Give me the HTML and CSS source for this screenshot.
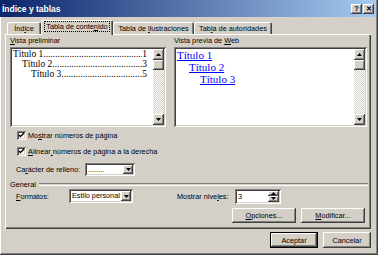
FILE: index.html
```html
<!DOCTYPE html>
<html lang="es">
<head>
    <meta charset="UTF-8">
    <meta name="viewport" content="width=device-width, initial-scale=1.0">
    <title>Índice y tablas</title>
    <link rel="stylesheet" href="styles.css">
</head>
<body>

    <div class="window">

        <!-- barra de título -->
        <div class="titlebar">
            <span class="title">Índice y tablas</span>
            <div class="caption-buttons">
                <span class="caption-btn">?</span>
                <span class="caption-btn close">✕</span>
            </div>
        </div>

        <!-- pestañas -->
        <div class="tabs">
            <div class="tab" style="width: 34px"><span>Índ<u>i</u>ce</span></div>
            <div class="tab selected" style="width: 72px"><span class="focus">Tabla de conte<u>n</u>ido</span></div>
            <div class="tab" style="width: 81px"><span>Tabla de <u>i</u>lustraciones</span></div>
            <div class="tab" style="width: 78px"><span>Tab<u>l</u>a de autoridades</span></div>
        </div>

        <div class="panel">

            <div class="previews">
                <div class="preview-col">
                    <div class="label"><u>V</u>ista preliminar</div>
                    <div class="listbox left-box">
                        <div class="list-content print">
                            <div class="toc-row lvl1"><span>Título 1</span><span class="leader"></span><span>1</span></div>
                            <div class="toc-row lvl2"><span>Título 2</span><span class="leader"></span><span>3</span></div>
                            <div class="toc-row lvl3"><span>Título 3</span><span class="leader"></span><span>5</span></div>
                        </div>
                        <div class="scrollbar">
                            <div class="sb-btn"><svg width="5" height="3"><polygon points="2.5,0 5,3 0,3" fill="#000"/></svg></div>
                            <div class="sb-thumb"></div>
                            <div class="sb-track"></div>
                            <div class="sb-btn"><svg width="5" height="3"><polygon points="0,0 5,0 2.5,3" fill="#000"/></svg></div>
                        </div>
                    </div>
                </div>
                <div class="preview-col">
                    <div class="label">Vista previa de <u>W</u>eb</div>
                    <div class="listbox right-box">
                        <div class="list-content web">
                            <div class="web-row lvl1"><a>Título 1</a></div>
                            <div class="web-row lvl2"><a>Título 2</a></div>
                            <div class="web-row lvl3"><a>Título 3</a></div>
                        </div>
                        <div class="scrollbar">
                            <div class="sb-btn"><svg width="5" height="3"><polygon points="2.5,0 5,3 0,3" fill="#000"/></svg></div>
                            <div class="sb-thumb"></div>
                            <div class="sb-track"></div>
                            <div class="sb-btn"><svg width="5" height="3"><polygon points="0,0 5,0 2.5,3" fill="#000"/></svg></div>
                        </div>
                    </div>
                </div>
            </div>

            <div class="check-row first">
                <span class="checkbox"><svg width="9" height="9"><path d="M2 4 L3.5 5.5 L7 2" stroke="#000" stroke-width="1.4" fill="none"/></svg></span>
                <span>Mo<u>s</u>trar números de página</span>
            </div>
            <div class="check-row">
                <span class="checkbox"><svg width="9" height="9"><path d="M2 4 L3.5 5.5 L7 2" stroke="#000" stroke-width="1.4" fill="none"/></svg></span>
                <span><u>A</u>linear<u> </u>números de página a la derecha</span>
            </div>

            <div class="fill-row">
                <span class="fill-label">Ca<u>r</u>ácter de relleno:</span>
                <div class="combo fill-combo">
                    <span class="combo-text">........</span>
                    <span class="combo-btn"><svg width="5" height="3"><polygon points="0,0 5,0 2.5,3" fill="#000"/></svg></span>
                </div>
            </div>

            <div class="group-title">
                <span>General</span>
                <span class="group-line"></span>
            </div>

            <div class="format-row">
                <span class="format-label"><u>F</u>ormatos:</span>
                <div class="combo format-combo">
                    <span class="combo-text">Estilo personal</span>
                    <span class="combo-btn"><svg width="5" height="3"><polygon points="0,0 5,0 2.5,3" fill="#000"/></svg></span>
                </div>
                <span class="levels-label">Mostrar nive<u>l</u>es:</span>
                <div class="spin">
                    <span class="spin-text">3</span>
                    <span class="spin-btns">
                        <span class="spin-btn"><svg width="5" height="3"><polygon points="2.5,0 5,3 0,3" fill="#000"/></svg></span>
                        <span class="spin-btn"><svg width="5" height="3"><polygon points="0,0 5,0 2.5,3" fill="#000"/></svg></span>
                    </span>
                </div>
            </div>

            <div class="panel-buttons">
                <button class="button"><u>O</u>pciones...</button>
                <button class="button"><u>M</u>odificar...</button>
            </div>

        </div>

        <div class="footer">
            <button class="button default">Aceptar</button>
            <button class="button">Cancelar</button>
        </div>

    </div>

</body>
</html>
```

FILE: styles.css
```css
body {
    margin: 0;
    padding: 0;
    font-family: 'Liberation Sans', Arial, sans-serif;
    font-size: 7.3px;
    color: #000;
    background-color: #d4d0c8;
}

u {
    text-decoration: underline;
    text-underline-offset: 1px;
}

.window {
    width: 378px;
    height: 255px;
    box-sizing: border-box;
    padding: 0 2px 2px 0;
    background-color: #d4d0c8;
    box-shadow: inset -1px -1px #404040, inset 1px 0 #fff, inset -2px -2px #808080;
}

/* barra de título */
.titlebar {
    height: 17px;
    display: flex;
    align-items: center;
    justify-content: space-between;
    padding: 0 2px 0 2px;
    background: linear-gradient(to right, #0a246a, #a6caf0);
}

.title {
    color: #fff;
    font-weight: bold;
    font-size: 8.5px;
}

.caption-buttons {
    display: flex;
    gap: 1px;
}

.caption-btn {
    width: 11px;
    height: 10px;
    display: flex;
    align-items: center;
    justify-content: center;
    font-weight: bold;
    font-size: 7.5px;
    background-color: #d4d0c8;
    box-shadow: inset -1px -1px #404040, inset 1px 1px #fff, inset -2px -2px #808080;
}

.caption-btn.close {
    font-size: 7px;
}

/* pestañas */
.tabs {
    display: flex;
    align-items: flex-end;
    height: 14px;
    margin: 3px 0 0 7px;
}

.tab {
    height: 12px;
    box-sizing: border-box;
    display: flex;
    align-items: center;
    justify-content: center;
    white-space: nowrap;
    border-radius: 2px 2px 0 0;
    background-color: #d4d0c8;
    box-shadow: inset 1px 1px #fff, inset -1px 0 #404040, inset -2px 0 #808080;
}

.tab.selected {
    height: 15px;
    margin-bottom: -1px;
    position: relative;
    z-index: 1;
    padding-bottom: 2px;
}

.focus {
    outline: 1px dotted #000;
    padding: 0 1px;
}

/* panel de la pestaña */
.panel {
    height: 195px;
    margin-left: 5px;
    width: 366px;
    box-sizing: border-box;
    padding: 3px 2px 0 1px;
    box-shadow: inset 1px 1px #fff, inset -1px -1px #404040, inset -2px -2px #808080;
}

.previews {
    display: flex;
    gap: 8px;
    padding-left: 4px;
}

.label {
    height: 10px;
    line-height: 8px;
    white-space: nowrap;
}

.listbox {
    height: 80px;
    box-sizing: border-box;
    padding: 2px;
    display: flex;
    background-color: #fff;
    box-shadow: inset 1px 1px #808080, inset -1px -1px #fff, inset 2px 2px #404040, inset -2px -2px #d4d0c8;
}

.left-box {
    width: 156px;
}

.right-box {
    width: 193px;
}

.list-content {
    flex: 1;
    overflow: hidden;
}

.scrollbar {
    width: 11px;
    display: flex;
    flex-direction: column;
}

.sb-btn, .sb-thumb, .combo-btn, .spin-btn {
    display: flex;
    align-items: center;
    justify-content: center;
    background-color: #d4d0c8;
    box-shadow: inset -1px -1px #404040, inset 1px 1px #fff, inset -2px -2px #808080;
}

.sb-btn {
    height: 11px;
}

.sb-thumb {
    height: 10px;
}

.sb-track {
    flex: 1;
    background: repeating-conic-gradient(#fff 0 25%, #d4d0c8 0 50%) 0 0 / 2px 2px;
}

/* vista preliminar */
.print {
    font-family: 'Liberation Serif', 'Times New Roman', serif;
    font-size: 9.5px;
    color: #000;
    padding: 0 6px 0 1px;
}

.toc-row {
    display: flex;
    height: 10px;
    line-height: 10px;
    white-space: nowrap;
}

.toc-row.lvl2 {
    padding-left: 9px;
}

.toc-row.lvl3 {
    padding-left: 18px;
}

.leader {
    flex: 1;
    overflow: hidden;
}

.leader::before {
    content: "..................................................................................................";
}

.web {
    font-family: 'Liberation Serif', 'Times New Roman', serif;
    font-size: 11px;
    padding: 0 0 0 1px;
}

.web-row {
    height: 12px;
    line-height: 12px;
}

.web-row a {
    color: #0000ff;
    text-decoration: underline;
}

.web-row.lvl2 {
    padding-left: 12px;
}

.web-row.lvl3 {
    padding-left: 23px;
}

/* casillas */
.check-row {
    display: flex;
    align-items: center;
    gap: 2px;
    height: 9px;
    margin-top: 7px;
    padding-left: 11px;
    white-space: nowrap;
}

.check-row.first {
    margin-top: 4px;
}

.checkbox {
    width: 9px;
    height: 9px;
    display: flex;
    background-color: #fff;
    box-shadow: inset 1px 1px #808080, inset -1px -1px #fff, inset 2px 2px #404040, inset -2px -2px #d4d0c8;
}

.fill-row {
    display: flex;
    align-items: center;
    margin-top: 7px;
    padding-left: 10px;
}

.fill-label {
    width: 69px;
    white-space: nowrap;
}

.combo {
    height: 13px;
    box-sizing: border-box;
    padding: 2px;
    display: flex;
    align-items: stretch;
    background-color: #fff;
    box-shadow: inset 1px 1px #808080, inset -1px -1px #fff, inset 2px 2px #404040, inset -2px -2px #d4d0c8;
}

.combo-text {
    flex: 1;
    padding-left: 1px;
    line-height: 9px;
    white-space: nowrap;
}

.combo-btn {
    width: 10px;
}

.fill-combo {
    width: 50px;
}

/* grupo General */
.group-title {
    display: flex;
    align-items: center;
    gap: 3px;
    height: 9px;
    margin-top: 4px;
    padding-left: 4px;
}

.group-line {
    flex: 1;
    height: 1px;
    border-top: 1px solid #808080;
    border-bottom: 1px solid #fff;
    margin-right: 1px;
}

.format-row {
    display: flex;
    align-items: center;
    height: 14px;
    padding-left: 10px;
}

.format-label {
    width: 53px;
}

.format-combo {
    width: 64px;
    height: 14px;
}

.format-combo .combo-text {
    line-height: 10px;
}

.levels-label {
    margin-left: 44px;
    width: 58px;
    white-space: nowrap;
}

.spin {
    width: 46px;
    height: 15px;
    box-sizing: border-box;
    padding: 2px;
    display: flex;
    background-color: #fff;
    box-shadow: inset 1px 1px #808080, inset -1px -1px #fff, inset 2px 2px #404040, inset -2px -2px #d4d0c8;
}

.spin-text {
    flex: 1;
    padding-left: 1px;
    line-height: 11px;
}

.spin-btns {
    width: 11px;
    display: flex;
    flex-direction: column;
}

.spin-btn {
    flex: 1;
}

/* botones */
.button {
    font-family: 'Liberation Sans', Arial, sans-serif;
    font-size: 7.3px;
    color: #000;
    padding: 0;
    border: none;
    background-color: #d4d0c8;
    box-shadow: inset -1px -1px #404040, inset 1px 1px #fff, inset -2px -2px #808080;
}

.panel-buttons {
    display: flex;
    justify-content: flex-end;
    gap: 5px;
    margin-top: 5px;
    padding-right: 4px;
}

.panel-buttons .button {
    width: 64px;
    height: 15px;
}

.footer {
    display: flex;
    justify-content: flex-end;
    gap: 5px;
    margin-top: 3px;
    padding-right: 5px;
}

.footer .button {
    width: 48px;
    height: 16px;
}

.button.default {
    box-shadow: inset 0 0 0 1px #000, inset -2px -2px #404040, inset 2px 2px #fff, inset -3px -3px #808080;
}
```
